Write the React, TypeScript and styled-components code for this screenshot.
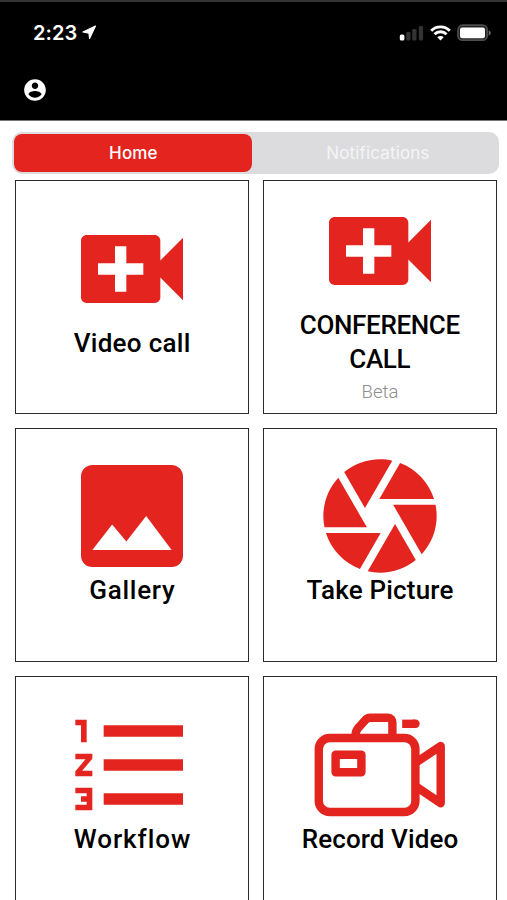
import React from "react";
import styled, { createGlobalStyle } from "styled-components";

const RED = "#e3241f";

const GlobalStyle = createGlobalStyle`
  * { box-sizing: border-box; }
  body { margin: 0; background: #fff; overflow: hidden; }
`;

const Screen = styled.div`
  width: 507px;
  height: 900px;
  overflow: hidden;
  background: #fff;
  display: flex;
  flex-direction: column;
`;

const Header = styled.header`
  flex: none;
  height: 121px;
  background: #000;
  border-top: 2px solid #333;
  border-bottom: 1px solid #777;
  color: #fff;
`;

const StatusBar = styled.div`
  display: flex;
  align-items: center;
  height: 61px;
  padding: 0 16px 0 33px;
`;

const Time = styled.span`
  font: 600 20px/24px Inter, sans-serif;
  letter-spacing: 0.1px;
  margin-right: 5px;
`;

const StatusIcons = styled.div`
  display: flex;
  align-items: center;
  gap: 6px;
  margin-left: auto;
`;

const Account = styled.button`
  display: block;
  margin: 14px 0 0 22px;
  padding: 0;
  border: 0;
  background: none;
  width: 26px;
  height: 26px;
  svg { display: block; }
`;

const Tabs = styled.nav`
  flex: none;
  display: flex;
  width: 487px;
  height: 42px;
  margin: 11px 0 0 12.4px;
  padding: 2px;
  border-radius: 10px;
  background: #dcdcde;
`;

const Tab = styled.button<{ $active?: boolean }>`
  flex: ${(p) => (p.$active ? "0 0 238px" : "1")};
  padding: ${(p) => (p.$active ? "1px 0 0" : "1px 0 0 6px")};
  border: 0;
  border-radius: 8px;
  background: ${(p) => (p.$active ? RED : "transparent")};
  color: ${(p) => (p.$active ? "#fff" : "#f4f4f6")};
  font: ${(p) => (p.$active ? 500 : 400)} 17px/37px Inter, sans-serif;
  letter-spacing: 0.15px;
`;

const Grid = styled.main`
  display: grid;
  grid-template-columns: 234px 234px;
  grid-auto-rows: 234px;
  gap: 14px;
  padding: 6px 0 0 15px;
`;

const Tile = styled.section`
  display: flex;
  flex-direction: column;
  align-items: center;
  justify-content: center;
  border: 1px solid #2b2b2b;
`;

const TileIcon = styled.svg`
  flex: none;
  display: block;
  width: 136px;
  height: 136px;
  margin-bottom: -11px;
  fill: ${RED};
`;

const Label = styled.div<{ $spacing: number }>`
  font: 500 26px/34px Roboto, sans-serif;
  letter-spacing: ${(p) => p.$spacing}px;
  margin-right: ${(p) => -p.$spacing}px;
  color: #000;
  text-align: center;
  white-space: pre-line;
`;

const Note = styled.div<{ $height?: number }>`
  height: ${(p) => p.$height ?? 34}px;
  font: 300 18.5px/32px Roboto, sans-serif;
  color: #8e8e8e;
`;

const videoCall = (
  <path d="M17 10.5V7c0-.55-.45-1-1-1H4c-.55 0-1 .45-1 1v10c0 .55.45 1 1 1h12c.55 0 1-.45 1-1v-3.500l4 4v-11l-4 4zM14 13h-3v3H9v-3H6v-2h3V8h2v3h3v2z" />
);

const gallery = (
  <path d="M21 19V5c0-1.1-.9-2-2-2H5c-1.1 0-2 .9-2 2v14c0 1.1.9 2 2 2h14c1.1 0 2-.9 2-2zM8.500 13.500l2.500 3.010L14.500 12l4.500 6H5l3.500-4.500z" />
);

const shutter = (
  <path d="M9.400 10.500l4.770-8.260C13.470 2.090 12.750 2 12 2c-2.400 0-4.600.85-6.320 2.250l3.660 6.350.06-.1zM21.540 9c-.92-2.920-3.150-5.260-6-6.340L11.880 9h9.660zm.26 1h-7.490l.29.5 4.760 8.250C21 16.970 22 14.610 22 12c0-.69-.07-1.350-.2-2zM8.540 12l-3.900-6.750C3.010 7.030 2 9.390 2 12c0 .69.07 1.350.2 2h7.490l-1.150-2zm-6.080 3c.92 2.920 3.150 5.260 6 6.340L12.120 15H2.460zm11.270 0l-3.900 6.760c.7.15 1.420.24 2.170.24 2.400 0 4.600-.85 6.320-2.250l-3.660-6.350-.93 1.600z" />
);

const numberedList = (
  <path d="M2 17h2v.5H3v1h1v.5H2v1h3v-4H2v1zm1-9h1V4H2v1h1v3zm-1 3h1.800L2 13.100v.9h3v-1H3.200L5 10.900V10H2v1zm5-6v2h14V5H7zm0 14h14v-2H7v2zm0-6h14v-2H7v2z" />
);

const camcorder = (
  <g fill="none" stroke={RED} strokeWidth="8.4" strokeLinejoin="round">
    <rect x="6.800" y="41" width="96.600" height="74" rx="11" />
    <path d="M43.600 38q0-4 2.600-7l7.400-8.200q2-2 5-2h17.200q4.600 0 4.600 5V38" />
    <path d="M90.200 26.800h12.500" strokeLinejoin="miter" />
    <path d="M102 26.800h1.500" strokeLinecap="round" />
    <rect x="23.600" y="57.800" width="25.800" height="17.500" />
    <path d="M104 65.500l24.700-16.500v57.300L104 89.500" />
  </g>
);

const tiles = [
  { label: "Video call", spacing: 0.3, icon: videoCall },
  { label: "CONFERENCE\nCALL", spacing: -0.35, icon: videoCall, note: "Beta", noteHeight: 35 },
  { label: "Gallery", spacing: 0.7, icon: gallery, noteHeight: 35 },
  { label: "Take Picture", spacing: 0.2, icon: shutter, noteHeight: 35 },
  { label: "Workflow", spacing: 0.95, icon: numberedList },
  { label: "Record Video", spacing: 0.1, icon: camcorder, box: 136 },
];

export default function App() {
  return (
    <Screen>
      <GlobalStyle />
      <Header>
        <StatusBar>
          <Time>2:23</Time>
          <svg width="15" height="15" viewBox="0 0 15 15" fill="#fff" stroke="#fff" strokeWidth="1.100" strokeLinejoin="round">
            <path d="M13.500 1L7.600 13.600L6.900 8.100L.9 7z" />
          </svg>
          <StatusIcons>
            <svg width="25" height="16" viewBox="0 0 25 16">
              <rect x=".8" y="9.500" width="4.600" height="6" rx="1.500" fill="#fff" />
              <rect x="7.200" y="7" width="4.300" height="8.500" rx="1.400" fill="#333" />
              <rect x="13.200" y="4" width="4.300" height="11.500" rx="1.400" fill="#333" />
              <rect x="19.800" y="1" width="4.300" height="14.500" rx="1.400" fill="#333" />
            </svg>
            <svg width="21" height="16" viewBox="0 0 21 16" fill="none" stroke="#fff" strokeWidth="2.900">
              <path d="M1.200 5.700a13.200 13.200 0 0 1 18.600 0" />
              <path d="M4.500 9.300a8.500 8.500 0 0 1 12 0" />
              <path d="M7.300 12.300a4.500 4.500 0 0 1 6.400 0L10.500 15.500z" fill="#fff" stroke="none" />
            </svg>
            <svg width="34" height="18" viewBox="0 0 34 18">
              <rect x="1" y="1.200" width="29.200" height="15" rx="4.500" fill="#222" stroke="#4c4c4c" strokeWidth="1.700" />
              <rect x="3" y="3.400" width="25" height="10.800" rx="2.200" fill="#fff" />
              <path d="M31.700 6.200q2.200 1 2.200 2.800t-2.200 2.800z" fill="#666" />
            </svg>
          </StatusIcons>
        </StatusBar>
        <Account aria-label="Account">
          <svg width="26" height="26" viewBox="0 0 24 24" fill="#fff">
            <path d="M12 2C6.480 2 2 6.480 2 12s4.480 10 10 10 10-4.480 10-10S17.520 2 12 2zm0 3c1.660 0 3 1.340 3 3s-1.340 3-3 3-3-1.340-3-3 1.340-3 3-3zm0 14.200c-2.500 0-4.710-1.280-6-3.220.03-1.990 4-3.080 6-3.080 1.990 0 5.970 1.090 6 3.080-1.290 1.940-3.500 3.220-6 3.220z" />
          </svg>
        </Account>
      </Header>
      <Tabs>
        <Tab $active>Home</Tab>
        <Tab>Notifications</Tab>
      </Tabs>
      <Grid>
        {tiles.map((t) => (
          <Tile key={t.label}>
            <TileIcon viewBox={`0 0 ${t.box ?? 24} ${t.box ?? 24}`}>{t.icon}</TileIcon>
            <Label $spacing={t.spacing}>{t.label}</Label>
            <Note $height={t.noteHeight}>{t.note}</Note>
          </Tile>
        ))}
      </Grid>
    </Screen>
  );
}
